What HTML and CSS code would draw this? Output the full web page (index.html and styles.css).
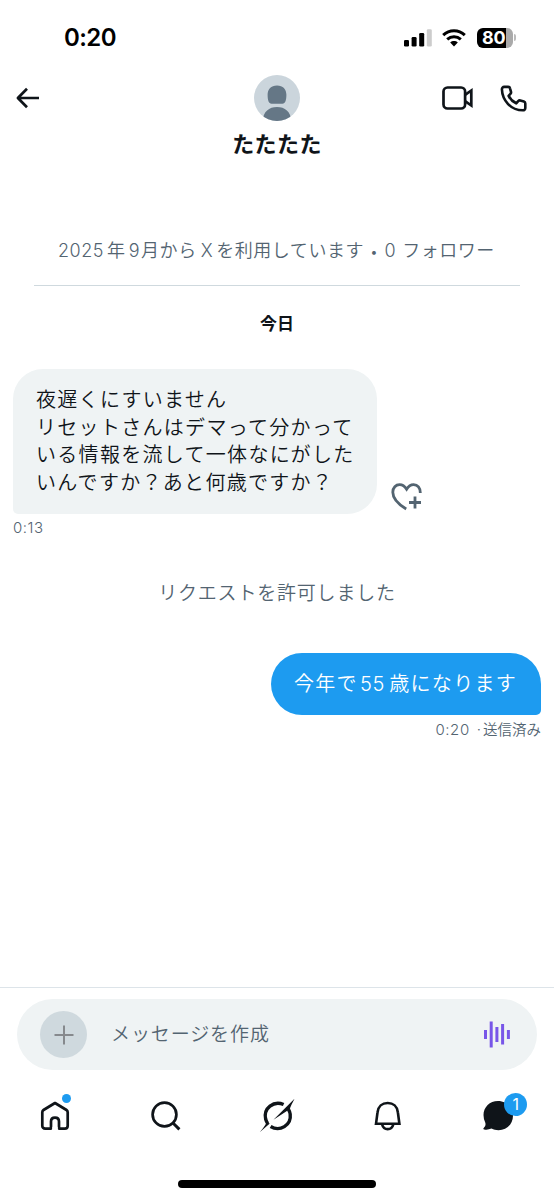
FILE: index.html
```html
<!DOCTYPE html>
<html lang="ja">
<head>
<meta charset="utf-8">
<title>たたたた</title>
<link rel="stylesheet" href="styles.css">
</head>
<body>
<div class="screen">
  <div class="status">
    <span class="clock">0:20</span>
    <div class="indicators">
      <svg class="signal" width="28" height="18" viewBox="0 0 28 18"><rect x="0" y="11" width="5" height="6.5" rx="1.3"/><rect x="7.6" y="8" width="5" height="9.5" rx="1.3"/><rect x="15.2" y="4" width="5" height="13.5" rx="1.3"/><rect x="22.8" y="0.3" width="5" height="17.2" rx="1.3" fill="#ccc"/></svg>
      <svg class="wifi" width="24" height="18" viewBox="0 0 24 18"><g fill="none" stroke="#000" stroke-width="3"><path d="M1.2 6.2C7.3.4 16.7.4 22.8 6.2"/><path d="M5.2 10.4c3.9-3.6 9.7-3.6 13.6 0"/></g><path d="M12 17.4l-3.8-3.9c2.2-1.9 5.4-1.9 7.6 0z"/></svg>
      <div class="battery"><span>80</span></div><i class="battery-tip"></i>
    </div>
  </div>
  <header class="header">
    <svg class="back" width="24" height="22" viewBox="0 0 24 22" fill="none" stroke="#0f1419" stroke-width="2.7"><path d="M23 11H2M11 1.800L1.900 11l9.100 9.200" stroke-linejoin="round"/></svg>
    <div class="person">
      <svg width="46" height="46" viewBox="0 0 46 46"><defs><clipPath id="face"><circle cx="23" cy="23" r="23"/></clipPath></defs><g clip-path="url(#face)"><path fill="#cbd5dc" d="M0 0h46v46H0z"/><path fill="#657786" d="M23 10.400c6 0 9.400 3.800 9.400 9.400 0 5-1 9-4 9H17.600c-3 0-4-4-4-9 0-5.600 3.400-9.400 9.400-9.400zM8.500 46c1-9.600 6.500-14 14.500-14s13.500 4.400 14.500 14z"/></g></svg>
      <h1>たたたた</h1>
    </div>
    <div class="calls">
      <svg width="32" height="24" viewBox="0 0 32 24" fill="none" stroke="#0f1419" stroke-width="2.7"><rect x="1.500" y="1.500" width="21.600" height="21" rx="4"/><path d="M23.100 8.800l6.200-4.300v15l-6.200-4.300"/></svg>
      <svg width="28" height="28" viewBox="0 0 28 28" fill="none" stroke="#0f1419" stroke-width="2.600" stroke-linejoin="round"><path d="M4.200 1.900H8.200c1 0 1.600.5 1.800 1.400l1 3.500c.2.800 0 1.500-.6 2.100L8.600 10.800c1.600 3.200 4 5.800 7.600 7.500l2-2.200c.6-.6 1.300-.8 2.100-.6l3.600 1c.9.3 1.400 1 1.400 1.900v4.600c0 1.500-1.100 2.400-2.500 2.300C11 25.300 2.300 15.600 1.900 4.300c0-1.400.9-2.400 2.300-2.400z"/></svg>
    </div>
  </header>
  <main class="thread">
    <p class="joined"><span>2025</span><span class="g3">年</span><span class="g3">9</span><span class="g1">月から</span><span class="g4">X</span><span class="g3">を</span>利用しています<span class="dot">•</span><span>0</span><span class="g6">フォロワー</span></p>
    <p class="day">今日</p>
    <div class="incoming">
      <div class="bubble">夜遅くにすいません<br>リセットさんはデマって分かって<br>いる情報を流して一体なにがした<br>いんですか？あと何歳ですか？</div>
      <svg class="react" width="32" height="28" viewBox="0 0 32 28" fill="none" stroke="#536471" stroke-width="2.800"><path d="M15.200 26C7.500 21.300 1.800 16 1.800 9.200c0-4.600 3-7.500 6.800-7.500 3 0 5.200 1.600 7 4.500 1.800-2.900 4-4.500 7-4.500 4 0 6.800 3.100 6.700 8.300M24 13.500v12M18 19.500h12"/></svg>
    </div>
    <p class="time">0:13</p>
    <p class="notice">リクエストを許可しました</p>
    <div class="outgoing">今年で<span class="num">55</span>歳になります</div>
    <p class="sent"><span class="senttime">0:20</span><span class="sep">·</span><span class="senttext">送信済み</span></p>
  </main>
  <footer>
    <div class="composer">
      <span class="plus"><svg width="20" height="20" viewBox="0 0 20 20" stroke="#86898d" stroke-width="2"><path d="M10 .5v19M.5 10h19"/></svg></span>
      <span class="placeholder">メッセージを作成</span>
      <svg width="26" height="27" viewBox="0 0 26 27" fill="#7856e8"><rect y="9" width="3" height="9"/><rect x="5.700" y=".500" width="3" height="26"/><rect x="11.400" y="6" width="3" height="15"/><rect x="17.100" y="3" width="3" height="20.500"/><rect x="22.900" y="9" width="3" height="9"/></svg>
    </div>
    <nav>
      <span class="tab"><svg width="30" height="30" viewBox="0 0 30 30" fill="none" stroke="#0f1419" stroke-width="2.700" stroke-linejoin="round"><path d="M11 27.600H5.200c-1.800 0-2.900-1.100-2.900-2.900V11.200c0-1 .4-1.700 1.200-2.200L15 2l11.500 7c.8.500 1.200 1.200 1.200 2.200v13.500c0 1.800-1.100 2.900-2.900 2.900H19V20.500c0-2.400-1.600-3.900-4-3.900s-4 1.500-4 3.900z"/><path d="M12.350 27.600h5.300" stroke="#fff" stroke-width="3.500"/></svg><i class="news"></i></span>
      <span class="tab"><svg width="30" height="30" viewBox="0 0 30 30" fill="none" stroke="#0f1419" stroke-width="2.700"><circle cx="13.500" cy="13.500" r="11.900"/><path d="M21.700 21.700L28.400 28.400" stroke-width="3"/></svg></span>
      <span class="tab"><svg width="36" height="36" viewBox="0 0 36 36"><g fill="none" stroke="#0f1419" stroke-width="3.400"><path d="M24.600 6.500C14.800 2.200 4 10.200 6.700 21.300c.5 1.800 1.100 3 2 4.200"/><path d="M11.600 28.500c9.200 5.600 21-1.300 19.600-12.200-.2-1.700-.8-3.200-1.600-4.600"/></g><path d="M14.500 21.800L35.500.700c-2.200 4.500-4.200 7.800-5 11.500l-2.600.900zM.700 34.300c2.500-3.200 5.400-6 6.900-10l3.200 1.200z" fill="#0f1419"/></svg></span>
      <span class="tab"><svg width="28" height="30" viewBox="0 0 28 30" fill="none" stroke="#0f1419" stroke-width="2.600"><path d="M2 22.800l1.500-11.300C4.100 5.600 8.200 2 13.700 2s9.600 3.600 10.200 9.500l1.500 11.300z"/><path d="M8.100 23.500c.8 3 2.900 4.600 5.600 4.600s4.800-1.600 5.600-4.600"/></svg></span>
      <span class="tab"><svg class="chat" width="32" height="32" viewBox="0 0 32 32" fill="#0f1419"><path d="M16 1C24.700 1 31 7.500 31 15.800S24.700 30.200 16.500 30.200c-2.700 0-4.800-.6-7-1.600-2.600 1.100-5 1.300-7.300.9-.9-.2-1.100-1-.5-1.600 1.600-1.500 2.200-3 1.600-5.200A17 17 0 0 1 1.500 15C1.500 7.200 7.700 1 16 1z"/></svg><b class="badge">1</b></span>
    </nav>
    <div class="home-bar"></div>
  </footer>
</div>
</body>
</html>
```
FILE: styles.css
```css
* { box-sizing: border-box; }
body, h1, p { margin: 0; }
body {
  background: #fff;
  color: #0f1419;
  font-family: Inter, "Noto Sans CJK JP", sans-serif;
}
svg { display: block; flex: none; }
.screen {
  width: 554px;
  height: 1199px;
  display: flex;
  flex-direction: column;
  overflow: hidden;
}
.status {
  height: 75px;
  padding: 0 38px 0 64px;
  display: flex;
  justify-content: space-between;
  align-items: center;
  color: #000;
}
.clock { font-size: 24px; font-weight: 600; line-height: 30px; letter-spacing: -.6px; }
.indicators { display: flex; align-items: center; }
.wifi { margin-left: 10px; }
.battery {
  width: 36px;
  height: 20px;
  margin-left: 11px;
  border-radius: 6px;
  background: linear-gradient(90deg, #000 29px, #aaa 29px);
  color: #fff;
  font-size: 18px;
  font-weight: 700;
  line-height: 20px;
  padding-left: 5px;
  letter-spacing: -.3px;
}
.battery-tip { width: 2px; height: 7px; margin-left: 1px; background: #bbb; border-radius: 0 2px 2px 0; }
.header { height: 88px; display: grid; grid-template-columns: 1fr 120px 1fr; padding: 0 26px 0 16px; }
.back { margin-top: 12px; }
.person { display: flex; flex-direction: column; align-items: center; width: 120px; margin-left: 5px; }
.person h1 { font-size: 22px; line-height: 30px; margin-top: 8px; font-weight: 700; letter-spacing: .4px; white-space: nowrap; }
.calls { display: flex; justify-content: flex-end; gap: 26px; padding-top: 11px; }
.calls svg:last-child { margin-top: -1px; }
.thread { flex: 1; }
.joined {
  margin: 0 34px;
  height: 123px;
  padding: 73px 0 0 24px;
  border-bottom: 1px solid #cfd9de;
  color: #536471;
  font-size: 18px;
  line-height: 30px;
  font-weight: 350;
  letter-spacing: .55px;
  white-space: nowrap;
}
.g1 { margin-left: 1px; }
.g3 { margin-left: 3px; }
.g4 { margin-left: 4px; }
.g6 { margin-left: 6px; }
.dot { margin: 0 6px; font-size: 14px; }
.day { text-align: center; margin-top: 24px; font-size: 17px; line-height: 28px; font-weight: 700; }
.incoming { display: flex; align-items: flex-end; padding-left: 13px; margin-top: 31px; }
.bubble {
  width: 364px;
  height: 145px;
  padding: 18px 0 0 23px;
  border-radius: 30px 30px 30px 5px;
  background: #eff3f4;
  font-size: 20px;
  line-height: 27.500px;
  font-weight: 350;
  letter-spacing: 1.300px;
  white-space: nowrap;
}
.react { margin: 0 0 3px 14px; }
.time { margin: 4px 0 0 13px; font-size: 15px; line-height: 20px; color: #536471; font-weight: 350; letter-spacing: .5px; }
.notice { margin-top: 41px; text-align: center; color: #536471; font-size: 19px; line-height: 30px; font-weight: 350; letter-spacing: .8px; }
.outgoing {
  width: 270px;
  height: 62px;
  margin: 44px 13px 0 auto;
  padding-left: 23px;
  border-radius: 31px 31px 5px 31px;
  background: #1d9bf0;
  color: #fff;
  font-size: 20px;
  line-height: 63px;
  font-weight: 350;
  letter-spacing: 1.300px;
  white-space: nowrap;
}
.num { margin: 0 4px 0 2px; letter-spacing: .800px; }
.sent { display: flex; justify-content: flex-end; margin: 4px 13px 0 0; font-size: 15px; line-height: 21px; color: #536471; font-weight: 350; }
.senttime { letter-spacing: .600px; }
.sep { margin: 0 2px 0 7px; }
.senttext { font-size: 14.500px; }
footer { border-top: 1px solid #dde4e9; height: 212px; }
.composer {
  width: 520px;
  height: 71px;
  margin: 11px 0 0 17px;
  padding: 0 27px 0 23px;
  display: flex;
  align-items: center;
  background: #eff3f4;
  border-radius: 36px;
}
.plus { width: 47px; height: 47px; border-radius: 50%; background: #cfd9de; display: flex; align-items: center; justify-content: center; }
.placeholder { flex: 1; margin-left: 24px; color: #536471; font-size: 19px; font-weight: 350; letter-spacing: .9px; line-height: 30px; }
nav { display: grid; grid-template-columns: repeat(5, 1fr); height: 91px; }
.tab { position: relative; display: flex; align-items: center; justify-content: center; }
.chat { margin-right: 2px; }
.news { position: absolute; left: 62px; top: 24px; width: 9px; height: 9px; border-radius: 50%; background: #1d9bf0; }
.badge { position: absolute; left: 61px; top: 23px; width: 23px; height: 23px; border-radius: 50%; background: #1d9bf0; color: #fff; font-size: 16px; line-height: 23px; font-weight: 400; text-align: center; }
.home-bar { width: 198px; height: 8px; margin: 19px auto 0; border-radius: 4px; background: #000; }
```
